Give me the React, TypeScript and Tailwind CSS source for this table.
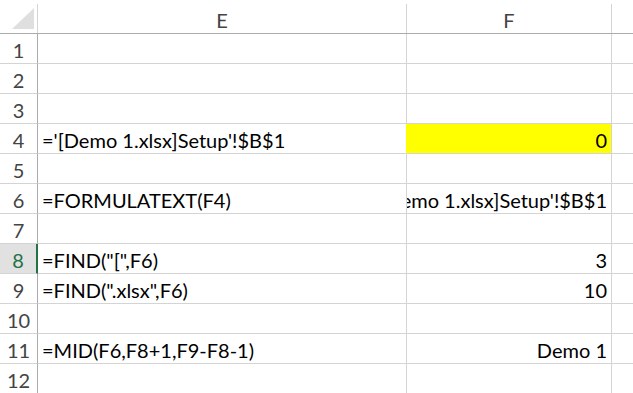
const rows: { e?: string; f?: string; fill?: boolean; clip?: boolean }[] = [
  {},
  {},
  {},
  { e: "='[Demo 1.xlsx]Setup'!$B$1", f: '0', fill: true },
  {},
  { e: '=FORMULATEXT(F4)', f: "='[Demo 1.xlsx]Setup'!$B$1", clip: true },
  {},
  { e: '=FIND("[",F6)', f: '3' },
  { e: '=FIND(".xlsx",F6)', f: '10' },
  {},
  { e: '=MID(F6,F8+1,F9-F8-1)', f: 'Demo 1' },
  {},
];

const font = { fontFamily: 'Lato, "Open Sans", sans-serif' };

export default function App() {
  return (
    <div className="w-[633px] h-[393px] overflow-hidden bg-white text-[20px] leading-none" style={font}>
      {/* Column headers */}
      <div className="flex h-[34px] border-b border-[#ababab]">
        <div className="w-[38px] shrink-0 pt-1">
          <div className="relative h-[29px] border-r border-[#d4d4d4]">
            <svg className="absolute left-[12px] top-[4px]" width="23" height="22" viewBox="0 0 23 22">
              <polygon points="0,21 22,0 22,21" fill="#dfdfdf" />
            </svg>
          </div>
        </div>
        <div className="w-[369px] shrink-0 pt-1">
          <div className="h-[29px] border-r border-[#d4d4d4] flex items-center justify-center text-[#444] pt-[2px]">E</div>
        </div>
        <div className="w-[205px] shrink-0 pt-1">
          <div className="h-[29px] border-r border-[#d4d4d4] flex items-center justify-center text-[#444] pt-[2px]">F</div>
        </div>
        <div className="flex-1" />
      </div>

      {rows.map((r, i) => {
        const n = i + 1;
        const active = n === 8;
        return (
          <div key={n} className="flex h-[30px]">
            <div
              className={
                active
                  ? 'w-[38px] shrink-0 flex items-center justify-center bg-[#e1e1e1] text-[#217346] border-b border-[#d4d4d4] border-r-2 border-r-[#217346] pt-[2px]'
                  : 'w-[38px] shrink-0 flex items-center justify-center text-[#444] border-b border-[#d4d4d4] border-r border-r-[#ababab] pt-[2px]'
              }
            >
              {n}
            </div>
            <div
              className={
                r.fill
                  ? 'w-[369px] shrink-0 flex items-center pl-[4px] pt-[2px] text-black border-b border-[#d4d4d4] border-r border-r-[#ffff00] whitespace-nowrap overflow-hidden'
                  : 'w-[369px] shrink-0 flex items-center pl-[4px] pt-[2px] text-black border-b border-[#d4d4d4] border-r whitespace-nowrap overflow-hidden'
              }
            >
              {r.e}
            </div>
            <div
              className={
                r.fill
                  ? 'w-[205px] shrink-0 flex items-center justify-end pr-[4px] pt-[2px] text-black bg-[#ffff00] border-b border-[#d4d4d4] border-r whitespace-nowrap overflow-hidden'
                  : 'w-[205px] shrink-0 flex items-center justify-end pr-[4px] pt-[2px] text-black border-b border-[#d4d4d4] border-r whitespace-nowrap overflow-hidden'
              }
            >
              {r.f && <span className="shrink-0">{r.f}</span>}
            </div>
            <div className="flex-1 border-b border-[#d4d4d4]" />
          </div>
        );
      })}
    </div>
  );
}
